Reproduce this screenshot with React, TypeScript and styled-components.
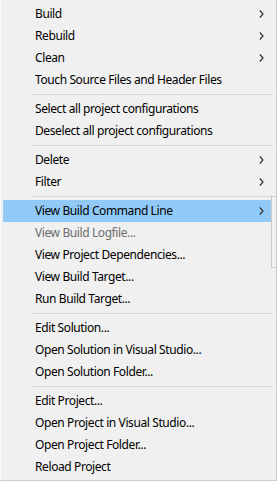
import React from "react";
import styled, { createGlobalStyle } from "styled-components";

const Global = createGlobalStyle`
  html, body { margin: 0; padding: 0; background: #f0f0f0; }
  body { width: 277px; height: 481px; overflow: hidden; }
`;

const Menu = styled.div`
  position: relative;
  box-sizing: border-box;
  width: 277px;
  height: 481px;
  background: #f0f0f0;
  border-left: 1px solid #f9f9f9;
  border-right: 1px solid #cccccc;
  border-bottom: 1px solid #cccccc;
  padding: 3px 3px 0 2px;
  display: flex;
  flex-direction: column;
  font-family: "Noto Sans", "Open Sans", sans-serif;
  font-size: 12px;
  letter-spacing: -0.4px;
  overflow: hidden;
`;

const Item = styled.div<{ $active?: boolean; $disabled?: boolean }>`
  height: 22px;
  display: flex;
  align-items: center;
  padding-left: 32px;
  padding-right: 8px;
  background: ${(p) => (p.$active ? "#91c9f7" : "transparent")};
  color: ${(p) => (p.$disabled ? "#6d6d6d" : "#000000")};
  white-space: nowrap;
`;

const Label = styled.span`
  flex: 1;
  line-height: 22px;
`;

const Separator = styled.div`
  height: 1px;
  margin: 3px 0 3px 29px;
  background: #d7d7d7;
`;

const Sub = styled.div`
  position: absolute;
  left: 270px;
  top: 196px;
  width: 40px;
  height: 72px;
  box-sizing: border-box;
  border: 1px solid #cccccc;
  background: #f0f0f0;
`;

const Chevron = () => (
  <svg width="5" height="8" viewBox="0 0 5 8" style={{ marginRight: 1 }}>
    <path d="M0.8 0.5 L4 4 L0.8 7.5" fill="none" stroke="#333" strokeWidth="1.2" />
  </svg>
);

type Entry = { label?: string; sub?: boolean; active?: boolean; disabled?: boolean; sep?: boolean };

const entries: Entry[] = [
  { label: "Build", sub: true },
  { label: "Rebuild", sub: true },
  { label: "Clean", sub: true },
  { label: "Touch Source Files and Header Files" },
  { sep: true },
  { label: "Select all project configurations" },
  { label: "Deselect all project configurations" },
  { sep: true },
  { label: "Delete", sub: true },
  { label: "Filter", sub: true },
  { sep: true },
  { label: "View Build Command Line", sub: true, active: true },
  { label: "View Build Logfile...", disabled: true },
  { label: "View Project Dependencies..." },
  { label: "View Build Target..." },
  { label: "Run Build Target..." },
  { sep: true },
  { label: "Edit Solution..." },
  { label: "Open Solution in Visual Studio..." },
  { label: "Open Solution Folder..." },
  { sep: true },
  { label: "Edit Project..." },
  { label: "Open Project in Visual Studio..." },
  { label: "Open Project Folder..." },
  { label: "Reload Project" },
];

export default function App() {
  return (
    <>
      <Global />
      <Menu>
        {entries.map((e, i) =>
          e.sep ? (
            <Separator key={i} />
          ) : (
            <Item key={i} $active={e.active} $disabled={e.disabled}>
              <Label>{e.label}</Label>
              {e.sub && <Chevron />}
            </Item>
          )
        )}
        <Sub />
      </Menu>
    </>
  );
}
